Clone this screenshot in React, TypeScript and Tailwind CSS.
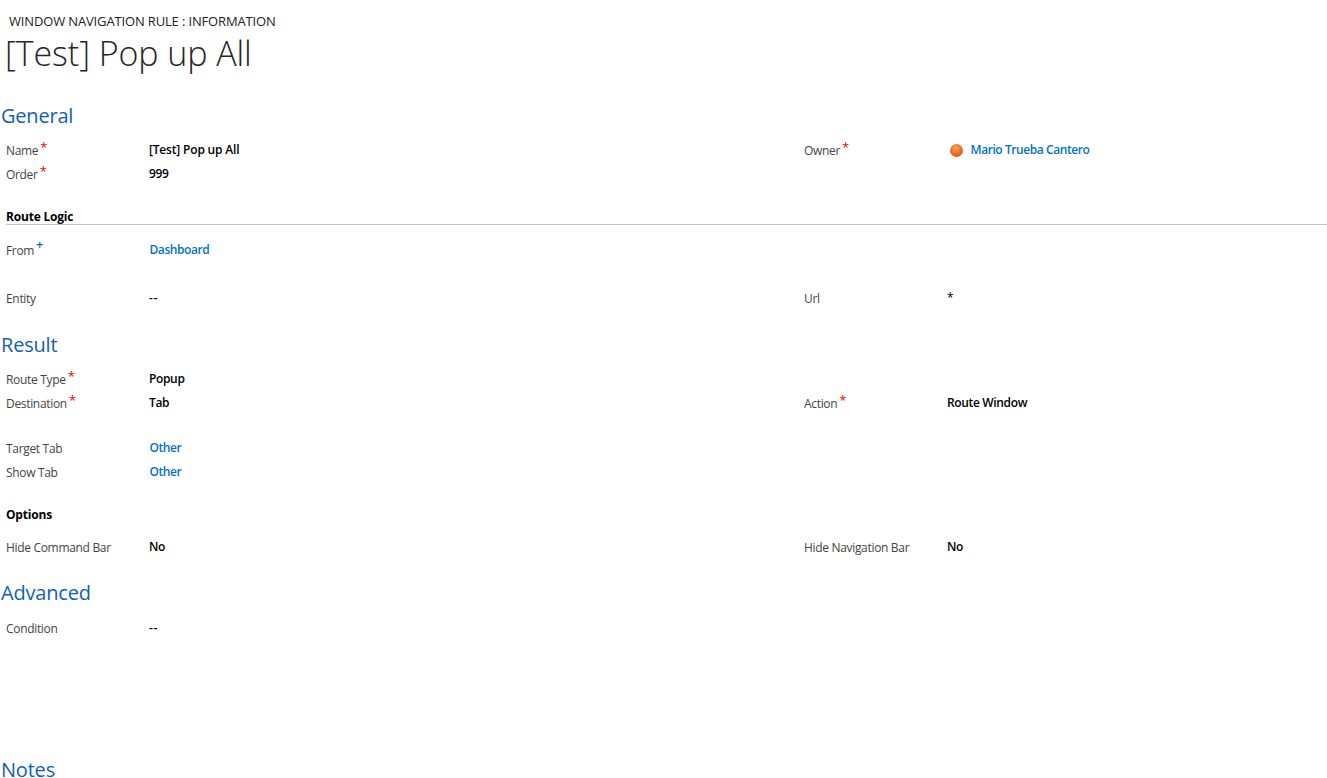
const F = "font-['Open_Sans','Noto_Sans',sans-serif]";

function Label({ text, mark }: { text: string; mark?: "req" | "rec" }) {
  return (
    <span className="relative text-[12px] tracking-[-0.32px] text-[#444444] leading-[24px]">
      {text}
      {mark === "req" && <span className="absolute top-[-7px] ml-[2px] text-[13px] font-medium text-[#ff0000]">*</span>}
      {mark === "rec" && <span className="absolute top-[-9px] ml-[2px] text-[12px] font-semibold text-[#1160b7]">+</span>}
    </span>
  );
}

function Value({ text, link, cls = "tracking-[-0.35px] font-semibold" }: { text: string; link?: boolean; cls?: string }) {
  return (
    <span className={`text-[12px] leading-[24px] ${cls} ${link ? "text-[#0072c6]" : "text-black"}`}>
      {text}
    </span>
  );
}

const LINK = "pl-[0.5px] tracking-[-0.42px] font-semibold";

function Row({
  h = "h-[24px]",
  l,
  v,
  r,
  rv,
}: {
  h?: string;
  l: React.ReactNode;
  v: React.ReactNode;
  r?: React.ReactNode;
  rv?: React.ReactNode;
}) {
  return (
    <div className={`flex ${h}`}>
      <div className="w-[149px] pl-[6px] pt-[1px]">{l}</div>
      <div className="w-[655px]">{v}</div>
      <div className="w-[143px] pt-[1px]">{r}</div>
      <div className="flex-1">{rv}</div>
    </div>
  );
}

function Section({ children, cls }: { children: React.ReactNode; cls: string }) {
  return <h2 className={`pl-[1px] text-[20px] tracking-[-0.2px] text-[#1160b7] ${cls}`}>{children}</h2>;
}

const DASH = "tracking-[0.6px] font-semibold";

export default function App() {
  return (
    <div className={`${F} h-[778px] w-[1327px] overflow-hidden bg-white`}>
      <div className="pl-[9px] pt-[12px] text-[13px] leading-[18px] tracking-[-0.15px] text-[#222222]">
        WINDOW NAVIGATION RULE : INFORMATION
      </div>
      <h1 className="-mt-[1px] pl-[5px] text-[34px] font-light leading-[48px] tracking-[-0.08px] text-[#262626]">[Test] Pop up All</h1>
      <Section cls="mt-[24px] leading-[30px]">General</Section>
      <div className="mt-[5px]">
        <Row
          l={<Label text="Name" mark="req" />}
          v={<Value text="[Test] Pop up All" cls="tracking-[-0.18px] font-semibold" />}
          r={<Label text="Owner" mark="req" />}
          rv={
            <div className="flex items-center h-[28px] ml-[3px]">
              <span className="mr-[7px] h-[13px] w-[13px] rounded-full bg-[radial-gradient(circle_at_45%_30%,#f9a05a,#e8641b_60%,#b84a10)]" />
              <Value text="Mario Trueba Cantero" link cls={LINK} />
            </div>
          }
        />
        <Row l={<Label text="Order" mark="req" />} v={<Value text="999" />} />
      </div>
      <div className="ml-[6px] mt-[24px] h-[17px] border-b border-[#c4c4c4] text-[12px] font-bold leading-[18px] tracking-[-0.2px] text-black">
        Route Logic
      </div>
      <div className="mt-[11px]">
        <Row h="h-[48px]" l={<Label text="From" mark="rec" />} v={<Value text="Dashboard" link cls={LINK} />} />
        <Row
          l={<Label text="Entity" />}
          v={<Value text="--" cls={DASH} />}
          r={<Label text="Url" />}
          rv={<Value text="*" cls="font-normal" />}
        />
      </div>
      <Section cls="mt-[22px] leading-[30px]">Result</Section>
      <div className="mt-[5px]">
        <Row l={<Label text="Route Type" mark="req" />} v={<Value text="Popup" />} />
        <Row
          l={<Label text="Destination" mark="req" />}
          v={<Value text="Tab" />}
          r={<Label text="Action" mark="req" />}
          rv={<Value text="Route Window" />}
        />
      </div>
      <div className="mt-[21px]">
        <Row l={<Label text="Target Tab" />} v={<Value text="Other" link cls={LINK} />} />
        <Row l={<Label text="Show Tab" />} v={<Value text="Other" link cls={LINK} />} />
      </div>
      <div className="mt-[24px] h-[21px] pl-[6px] text-[12px] font-bold leading-[18px] tracking-[-0.2px] text-black">Options</div>
      <div className="mt-[6px]">
        <Row
          l={<Label text="Hide Command Bar" />}
          v={<Value text="No" />}
          r={<Label text="Hide Navigation Bar" />}
          rv={<Value text="No" />}
        />
      </div>
      <Section cls="mt-[21px] leading-[30px]">Advanced</Section>
      <div className="mt-[6px]">
        <Row l={<Label text="Condition" />} v={<Value text="--" cls={DASH} />} />
      </div>
      <Section cls="mt-[124px] leading-[16px]">Notes</Section>
    </div>
  );
}
